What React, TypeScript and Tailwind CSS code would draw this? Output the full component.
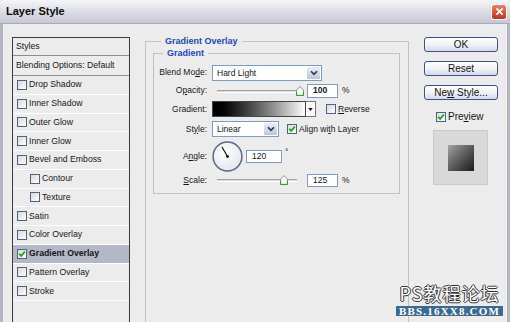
import React from 'react'

type Effect = { name: string; sub?: boolean; on?: boolean }

const effects: Effect[] = [
  { name: 'Drop Shadow' },
  { name: 'Inner Shadow' },
  { name: 'Outer Glow' },
  { name: 'Inner Glow' },
  { name: 'Bevel and Emboss' },
  { name: 'Contour', sub: true },
  { name: 'Texture', sub: true },
  { name: 'Satin' },
  { name: 'Color Overlay' },
  { name: 'Gradient Overlay', on: true },
  { name: 'Pattern Overlay' },
  { name: 'Stroke' },
]

const Check = ({ checked = false }: { checked?: boolean }) => (
  <span className="flex h-[10px] w-[10px] shrink-0 items-center justify-center border border-[#4f6187] bg-linear-to-br from-[#d8d8d4] to-white">
    {checked && (
      <svg viewBox="0 0 8 8" className="h-[8px] w-[8px]">
        <path d="M1.2 3.8 L3.1 5.9 L6.9 1.6" fill="none" stroke="#21a121" strokeWidth="1.7" />
      </svg>
    )}
  </span>
)

const Chevron = () => (
  <svg viewBox="0 0 8 6" className="h-[6px] w-[8px]">
    <path d="M1 1.2 L4 4.4 L7 1.2" fill="none" stroke="#2c3550" strokeWidth="1.6" />
  </svg>
)

const Select = ({ value, className }: { value: string; className: string }) => (
  <div className={`flex h-[16px] items-stretch border border-[#7f9db9] bg-white ${className}`}>
    <span className="flex-1 pl-[4px] leading-[14px]">{value}</span>
    <span className="m-px flex w-[13px] items-center justify-center rounded-[1px] bg-linear-to-b from-[#e9edf7] to-[#bcc5dc]">
      <Chevron />
    </span>
  </div>
)

const Thumb = ({ className }: { className: string }) => (
  <svg viewBox="0 0 8 10" className={`absolute top-[1px] h-[10px] w-[8px] ${className}`}>
    <path d="M0.5 4 L4 0.6 L7.5 4 V9.5 H0.5 Z" fill="#f6f6f6" stroke="#7a7a7a" strokeWidth="0.8" />
    <path d="M0.6 6 V9.4 H7.4 V6" fill="none" stroke="#2f9a3a" strokeWidth="1" />
  </svg>
)

const Slider = ({ thumb, track }: { thumb: string; track: string }) => (
  <div className="relative h-[12px] w-[91px] shrink-0">
    <div className={`absolute left-[5px] top-[5px] h-[3px] border-t border-[#a2a2a2] border-b border-b-white bg-[#d9d9d9] ${track}`} />
    <Thumb className={thumb} />
  </div>
)

const Field = ({ value, className }: { value: string; className: string }) => (
  <div className={`flex items-center border border-[#7f9db9] bg-white pl-[5px] ${className}`}>{value}</div>
)

const Button = ({ children }: { children: React.ReactNode }) => (
  <div className="flex h-[15px] w-[74px] items-center justify-center rounded-[3px] border border-[#38548a] bg-linear-to-b from-white via-[#f3f3f7] to-[#d5d9e8] text-[10px] leading-none text-[#111]">
    <span>{children}</span>
  </div>
)

const Row = ({ label, className, children }: { label: React.ReactNode; className: string; children?: React.ReactNode }) => (
  <div className={`flex items-center ${className}`}>
    <span className="w-[54px] shrink-0 pr-px text-right">{label}</span>
    <div className="ml-[4px] flex items-center">{children}</div>
  </div>
)

const Dial = () => (
  <svg viewBox="0 0 31 31" className="h-[31px] w-[31px] shrink-0">
    <defs>
      <radialGradient id="dialfill" cx="40%" cy="35%" r="70%">
        <stop offset="0%" stopColor="#ffffff" />
        <stop offset="100%" stopColor="#e3e5ec" />
      </radialGradient>
    </defs>
    <circle cx="15.5" cy="15.5" r="14.4" fill="url(#dialfill)" stroke="#5b6784" strokeWidth="1.5" />
    <line x1="15.5" y1="15.5" x2="10" y2="6" stroke="#111" strokeWidth="1.2" />
    <circle cx="15.5" cy="15.5" r="1.4" fill="#111" />
  </svg>
)

export default function App() {
  return (
    <div className="flex h-[322px] w-[510px] flex-col overflow-hidden bg-[#ececec] font-['Liberation_Sans',Arial,sans-serif] text-[#161616]">
      {/* title bar */}
      <div className="flex h-[24px] shrink-0 items-center rounded-t-[5px] border-b border-[#a9abb8] bg-linear-to-b from-[#f6f6f9] via-[#dcdde5] to-[#c5c7d3] pl-[6px] pr-[3px]">
        <span className="flex-1 text-[11px] font-bold text-[#0c0c0c]">Layer Style</span>
        <div className="flex h-[16px] w-[16px] items-center justify-center rounded-[3px] border border-white bg-linear-to-b from-[#e8826a] via-[#d4573b] to-[#b93a22]">
          <svg viewBox="0 0 10 10" className="h-[9px] w-[9px]">
            <path d="M1.5 1.5 L8.5 8.5 M8.5 1.5 L1.5 8.5" stroke="white" strokeWidth="1.8" />
          </svg>
        </div>
      </div>

      <div className="relative flex min-h-0 flex-1 border-x-[3px] border-[#b2b4c1]">
        {/* styles list */}
        <div className="ml-[9px] mt-[13px] h-[300px] w-[118px] shrink-0 border border-[#3c3c3c] bg-[#ececec] text-[8.7px]">
          <div className="flex h-[18px] items-center border-b border-[#8c8c8c] pl-[3px]">Styles</div>
          <div className="flex h-[20px] items-center border-b border-[#8c8c8c] pl-[3px]">Blending Options: Default</div>
          {effects.map((e) => (
            <div
              key={e.name}
              className={`flex h-[18.75px] items-center border-b border-white ${e.sub ? 'pl-[17px]' : 'pl-[4px]'} ${e.on ? 'bg-[#b4b7c6] font-bold' : ''}`}
            >
              <Check checked={e.on} />
              <span className="ml-[2px]">{e.name}</span>
            </div>
          ))}
        </div>

        {/* options */}
        <fieldset className="ml-[15px] mt-[11px] h-[300px] w-[264px] shrink-0 border border-[#c2c2c2] pl-[7px] pr-[8px]">
          <legend className="ml-[8px] px-[4px] text-[9px] font-bold leading-[12px] text-[#1d45b5]">Gradient Overlay</legend>
          <fieldset className="border border-[#c2c2c2] pb-[5px] pt-[5px] text-[8.5px]">
            <legend className="ml-[9px] px-[4px] text-[9px] font-bold leading-[12px] text-[#1d45b5]">Gradient</legend>
            <Row label={<>Blend Mo<u>d</u>e:</>} className="h-[17px]">
              <Select value="Hard Light" className="w-[110px]" />
            </Row>
            <Row label={<>O<u>p</u>acity:</>} className="h-[19px]">
              <Slider thumb="left-[84px]" track="right-[4px]" />
              <Field value="100" className="ml-[4px] h-[14px] w-[31px] font-bold" />
              <span className="ml-[4px]">%</span>
            </Row>
            <Row label="Gradient:" className="h-[18px]">
              <div className="h-[16px] w-[94px] border border-[#444] bg-linear-to-r from-black to-white" />
              <div className="flex h-[16px] w-[10px] items-center justify-center border border-l-0 border-[#777] bg-white">
                <svg viewBox="0 0 6 4" className="h-[3px] w-[5px]">
                  <path d="M0 0 H6 L3 4 Z" fill="#111" />
                </svg>
              </div>
              <span className="ml-[10px]"><Check /></span>
              <span className="ml-[2px]"><u>R</u>everse</span>
            </Row>
            <Row label={<>St<u>y</u>le:</>} className="h-[22px]">
              <Select value="Linear" className="w-[67px]" />
              <span className="ml-[8px]"><Check checked /></span>
              <span className="ml-[2px]">Align wi<u>t</u>h Layer</span>
            </Row>
            <Row label={<>A<u>n</u>gle:</>} className="h-[32px]">
              <Dial />
              <Field value="120" className="ml-[3px] h-[13px] w-[36px]" />
              <span className="mb-[8px] ml-[3px]">°</span>
            </Row>
            <Row label={<><u>S</u>cale:</>} className="h-[16px]">
              <Slider thumb="left-[68px]" track="right-[6px]" />
              <Field value="125" className="ml-[4px] h-[13px] w-[31px]" />
              <span className="ml-[4px]">%</span>
            </Row>
          </fieldset>
        </fieldset>

        {/* buttons */}
        <div className="ml-[15px] mt-[13px] flex w-[74px] shrink-0 flex-col">
          <Button>OK</Button>
          <div className="mt-[9px]"><Button>Reset</Button></div>
          <div className="mt-[9px]"><Button>Ne<u>w</u> Style...</Button></div>
          <div className="ml-[12px] mt-[9px] flex items-center text-[10px]">
            <Check checked />
            <span className="ml-[2px]">Pre<u>v</u>iew</span>
          </div>
          <div className="ml-[9px] mt-[6px] flex h-[55px] w-[55px] items-center justify-center border border-[#c9c9c9] bg-[#d9d9d9]">
            <div className="h-[26px] w-[26px] bg-linear-to-br from-[#a4a4a4] to-[#1c1c1c]" />
          </div>
        </div>

        {/* watermark */}
        <div className="absolute bottom-[6px] right-[4px] flex w-[107px] flex-col items-stretch">
          <span className="text-center font-['Noto_Sans_CJK_SC',sans-serif] text-[18px] leading-[18px] tracking-[1px] text-white [text-shadow:1px_0_#333,-1px_0_#333,0_1px_#333,0_-1px_#333]">
            PS教程论坛
          </span>
          <span className="mt-[4px] bg-[#3b6a8d] text-center font-['Liberation_Serif',serif] text-[11px] font-bold leading-[10px] tracking-[1.2px] text-white">
            BBS.16XX8.COM
          </span>
        </div>
      </div>
    </div>
  )
}
